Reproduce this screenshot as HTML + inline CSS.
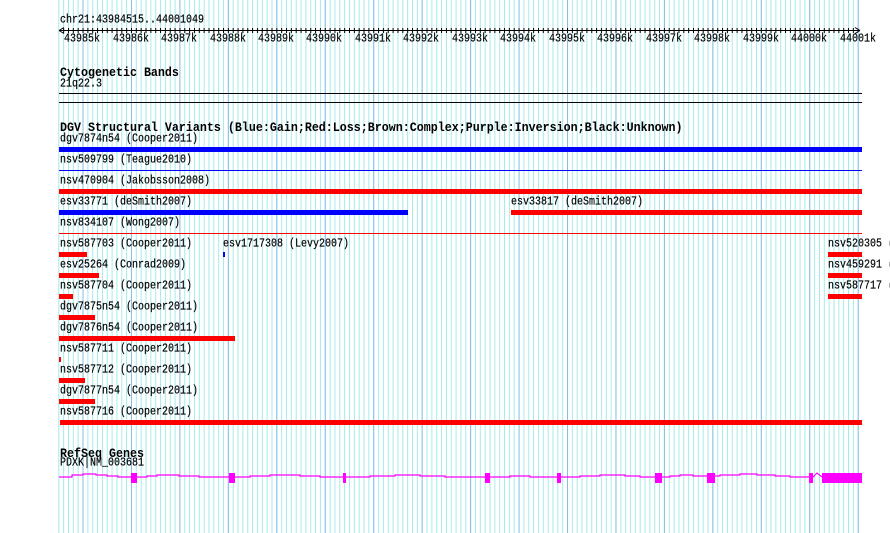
<!DOCTYPE html>
<html><head><meta charset="utf-8"><style>
html,body{margin:0;padding:0;}
body{width:890px;height:533px;position:relative;overflow:hidden;background:#fff;font-family:"Liberation Mono",monospace;}
.t{position:absolute;font-size:10px;line-height:10px;white-space:nowrap;color:#000;transform:scale(1,1.22);transform-origin:0 8px;-webkit-text-stroke:0.15px #000;}
.b{position:absolute;font-size:11.67px;line-height:12px;font-weight:bold;white-space:nowrap;color:#000;transform:scale(1,1.1);transform-origin:0 9px;}
svg{position:absolute;left:0;top:0;}
</style></head><body>
<svg width="890" height="533" xmlns="http://www.w3.org/2000/svg">
<defs>
<pattern id="lg" x="58.3" y="0" width="4.845" height="10" patternUnits="userSpaceOnUse"><rect x="0" y="0" width="1" height="10" fill="#a6eaea"/></pattern>
<pattern id="dg" x="82.5" y="0" width="48.45" height="10" patternUnits="userSpaceOnUse"><rect x="0" y="0" width="1" height="10" fill="#88bde8"/></pattern>
<pattern id="tk" x="58.3" y="0" width="4.845" height="10" patternUnits="userSpaceOnUse"><rect x="0" y="0" width="1" height="10" fill="#000"/></pattern>
</defs>
<rect x="58" y="0" width="801" height="533" fill="url(#lg)"/>
<rect x="58" y="0" width="801" height="533" fill="url(#dg)"/>
<rect x="59" y="30" width="801" height="1" fill="#000"/>
<rect x="60" y="28" width="798" height="5" fill="url(#tk)"/>
<path d="M59 30.5 L64 27.5 M59 30.5 L64 33.5 M860 30.5 L855 27.5 M860 30.5 L855 33.5" stroke="#000" stroke-width="1"/>
<rect x="59" y="93" width="803" height="1" fill="#000"/>
<rect x="59" y="102" width="803" height="1" fill="#000"/>
<rect x="59" y="147" width="803" height="5" fill="#0000ff"/>
<rect x="59" y="170" width="803" height="1" fill="#0000ff"/>
<rect x="59" y="189" width="803" height="5" fill="#ff0000"/>
<rect x="59" y="210" width="349" height="5" fill="#0000ff"/>
<rect x="511" y="210" width="351" height="5" fill="#ff0000"/>
<rect x="59" y="233" width="803" height="1" fill="#ff0000"/>
<rect x="59" y="252" width="28" height="5" fill="#ff0000"/>
<rect x="223" y="252" width="2" height="5" fill="#0000ff"/>
<rect x="828" y="252" width="34" height="5" fill="#ff0000"/>
<rect x="59" y="273" width="40" height="5" fill="#ff0000"/>
<rect x="828" y="273" width="34" height="5" fill="#ff0000"/>
<rect x="59" y="294" width="14" height="5" fill="#ff0000"/>
<rect x="828" y="294" width="34" height="5" fill="#ff0000"/>
<rect x="59" y="315" width="36" height="5" fill="#ff0000"/>
<rect x="59" y="336" width="176" height="5" fill="#ff0000"/>
<rect x="59" y="357" width="2" height="5" fill="#ff0000"/>
<rect x="59" y="378" width="26" height="5" fill="#ff0000"/>
<rect x="59" y="399" width="36" height="5" fill="#ff0000"/>
<rect x="60" y="420" width="802" height="5" fill="#ff0000"/>
<polyline fill="none" stroke="#ff00ff" stroke-width="1.2" points="59,477 72,477 72,475 83,475 83,474 96,474 96,475 107,475 107,476 118,476 118,477 131,477 137,477 147,477 147,476 157,476 157,475 179,475 179,476 199,476 199,477 229,477 235,477 250,477 250,476 270,476 270,475 300,475 300,476 320,476 320,477 346,477 370,477 370,476 395,476 395,475 420,475 420,476 445,476 445,477 485,477 490,477 510,477 510,476 530,476 530,477 561,477 580,477 580,476 600,476 600,475 625,475 625,476 640,476 640,477 655,477 662,477 670,477 670,476 680,476 680,475 693,475 693,476 707,476 715,476 720,476 720,475 740,475 740,474 757,474 757,475 775,475 775,476 790,476 790,477 809,477 813,477 817,473 822,477"/>
<g fill="#ff00ff">
<rect x="131" y="473" width="6" height="10"/>
<rect x="229" y="473" width="6" height="10"/>
<rect x="343" y="473" width="3" height="10"/>
<rect x="485" y="473" width="5" height="10"/>
<rect x="557" y="473" width="4" height="10"/>
<rect x="655" y="473" width="7" height="10"/>
<rect x="707" y="473" width="8" height="10"/>
<rect x="809" y="473" width="4" height="10"/>
<rect x="822" y="473" width="40" height="10"/>
</g>
</svg>
<div class="t" style="left:60px;top:17px">chr21:43984515..44001049</div>
<div class="t" style="left:64px;top:36px">43985k</div>
<div class="t" style="left:113px;top:36px">43986k</div>
<div class="t" style="left:161px;top:36px">43987k</div>
<div class="t" style="left:210px;top:36px">43988k</div>
<div class="t" style="left:258px;top:36px">43989k</div>
<div class="t" style="left:306px;top:36px">43990k</div>
<div class="t" style="left:355px;top:36px">43991k</div>
<div class="t" style="left:403px;top:36px">43992k</div>
<div class="t" style="left:452px;top:36px">43993k</div>
<div class="t" style="left:500px;top:36px">43994k</div>
<div class="t" style="left:549px;top:36px">43995k</div>
<div class="t" style="left:597px;top:36px">43996k</div>
<div class="t" style="left:646px;top:36px">43997k</div>
<div class="t" style="left:694px;top:36px">43998k</div>
<div class="t" style="left:743px;top:36px">43999k</div>
<div class="t" style="left:791px;top:36px">44000k</div>
<div class="t" style="left:840px;top:36px">44001k</div>
<div class="b" style="left:60px;top:67px">Cytogenetic Bands</div>
<div class="t" style="left:60px;top:81px">21q22.3</div>
<div class="b" style="left:60px;top:122px">DGV Structural Variants (Blue:Gain;Red:Loss;Brown:Complex;Purple:Inversion;Black:Unknown)</div>
<div class="t" style="left:60px;top:136px">dgv7874n54 (Cooper2011)</div>
<div class="t" style="left:60px;top:157px">nsv509799 (Teague2010)</div>
<div class="t" style="left:60px;top:178px">nsv470904 (Jakobsson2008)</div>
<div class="t" style="left:60px;top:199px">esv33771 (deSmith2007)</div>
<div class="t" style="left:511px;top:199px">esv33817 (deSmith2007)</div>
<div class="t" style="left:60px;top:220px">nsv834107 (Wong2007)</div>
<div class="t" style="left:60px;top:241px">nsv587703 (Cooper2011)</div>
<div class="t" style="left:223px;top:241px">esv1717308 (Levy2007)</div>
<div class="t" style="left:828px;top:241px">nsv520305 (</div>
<div class="t" style="left:60px;top:262px">esv25264 (Conrad2009)</div>
<div class="t" style="left:828px;top:262px">nsv459291 (</div>
<div class="t" style="left:60px;top:283px">nsv587704 (Cooper2011)</div>
<div class="t" style="left:828px;top:283px">nsv587717 (</div>
<div class="t" style="left:60px;top:304px">dgv7875n54 (Cooper2011)</div>
<div class="t" style="left:60px;top:325px">dgv7876n54 (Cooper2011)</div>
<div class="t" style="left:60px;top:346px">nsv587711 (Cooper2011)</div>
<div class="t" style="left:60px;top:367px">nsv587712 (Cooper2011)</div>
<div class="t" style="left:60px;top:388px">dgv7877n54 (Cooper2011)</div>
<div class="t" style="left:60px;top:409px">nsv587716 (Cooper2011)</div>
<div class="b" style="left:60px;top:448px">RefSeq Genes</div>
<div class="t" style="left:60px;top:460px">PDXK|NM_003681</div>
</body></html>
